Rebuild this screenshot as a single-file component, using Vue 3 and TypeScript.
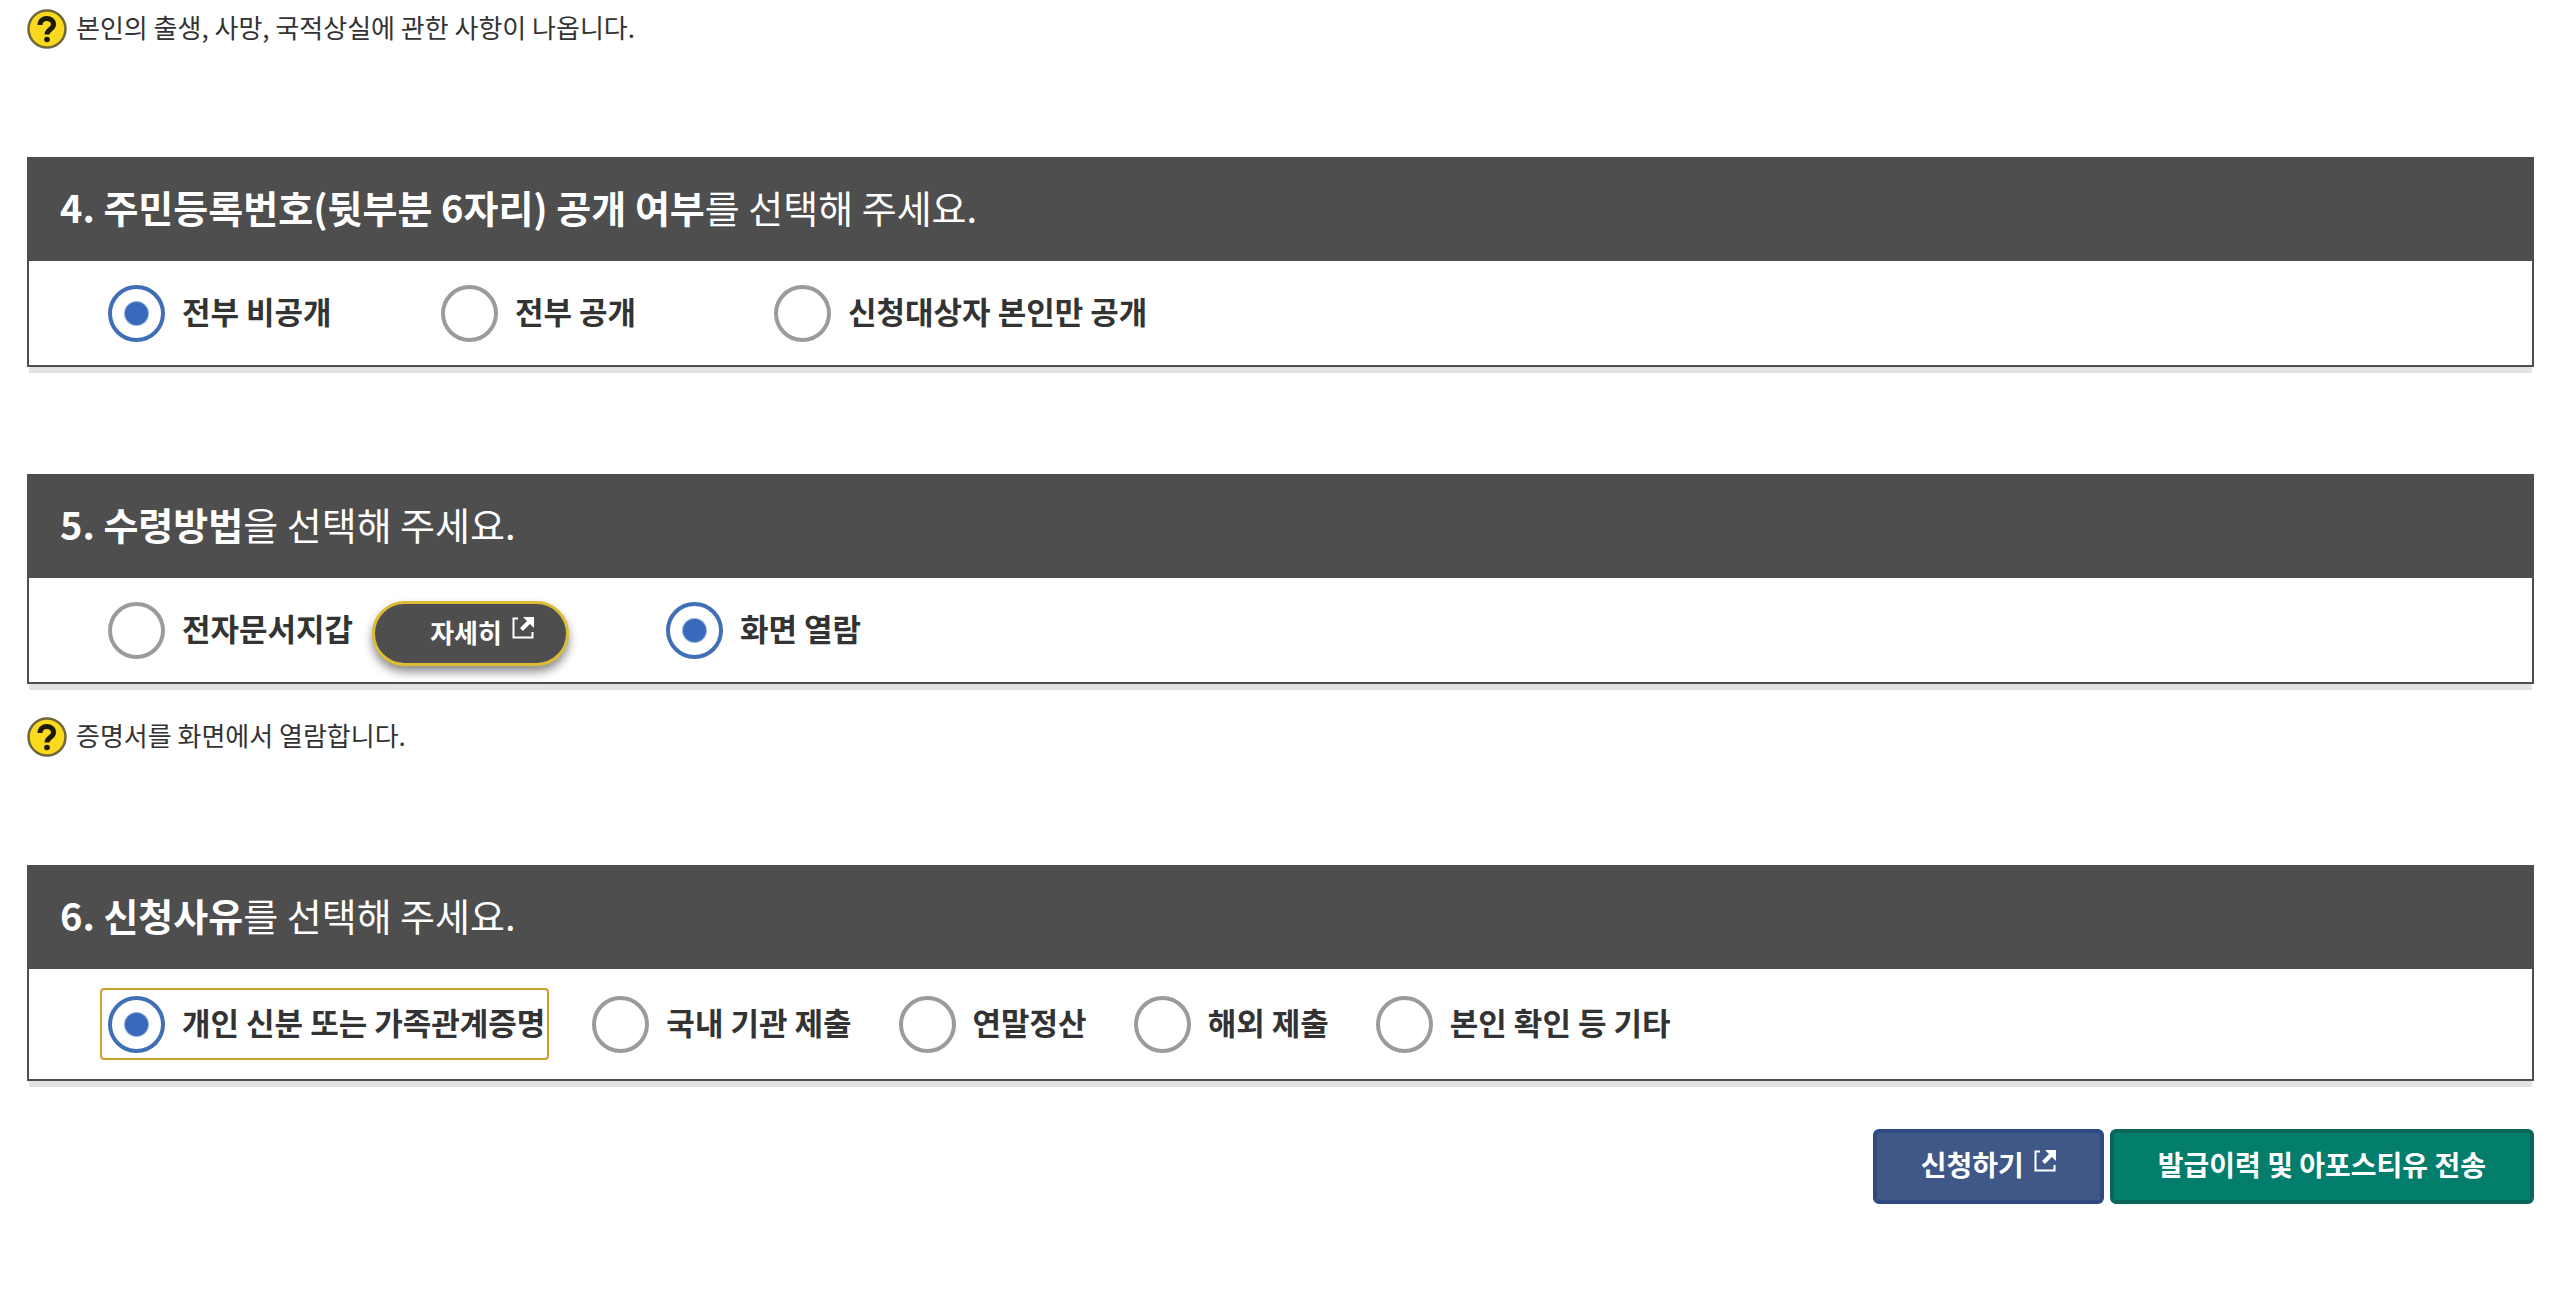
<script setup lang="ts">
import { ref } from 'vue'

interface Option {
  value: string
  label: string
  detail?: boolean
}

interface Section {
  id: string
  number: number
  strong: string
  rest: string
  layout: string
  options: Option[]
  note?: string
}

const introNote = '본인의 출생, 사망, 국적상실에 관한 사항이 나옵니다.'

const sections: Section[] = [
  {
    id: 'disclosure',
    number: 4,
    strong: '주민등록번호(뒷부분 6자리) 공개 여부',
    rest: '를 선택해 주세요.',
    layout: 'columns',
    options: [
      { value: 'none', label: '전부 비공개' },
      { value: 'all', label: '전부 공개' },
      { value: 'self', label: '신청대상자 본인만 공개' },
    ],
  },
  {
    id: 'receive',
    number: 5,
    strong: '수령방법',
    rest: '을 선택해 주세요.',
    layout: 'wide',
    options: [
      { value: 'wallet', label: '전자문서지갑', detail: true },
      { value: 'screen', label: '화면 열람' },
    ],
    note: '증명서를 화면에서 열람합니다.',
  },
  {
    id: 'reason',
    number: 6,
    strong: '신청사유',
    rest: '를 선택해 주세요.',
    layout: 'compact',
    options: [
      { value: 'personal', label: '개인 신분 또는 가족관계증명' },
      { value: 'domestic', label: '국내 기관 제출' },
      { value: 'yearend', label: '연말정산' },
      { value: 'overseas', label: '해외 제출' },
      { value: 'etc', label: '본인 확인 등 기타' },
    ],
  },
]

const selected = ref<Record<string, string>>({
  disclosure: 'none',
  receive: 'screen',
  reason: 'personal',
})
</script>

<template>
  <main class="page">
    <p class="note">
      <svg class="note-icon" viewBox="0 0 40 40" aria-hidden="true">
        <circle cx="20" cy="20" r="18.5" fill="#fbd91f" stroke="#6f673a" stroke-width="2.5" />
        <path d="M13 16c0-8.500 13.500-8.500 13.500-.5 0 5-6.500 4.500-6.500 10" fill="none" stroke="#1d1a08" stroke-width="5" />
        <circle cx="20" cy="30.5" r="2.800" fill="#1d1a08" />
      </svg>
      <span>{{ introNote }}</span>
    </p>

    <section v-for="section in sections" :key="section.id" class="block">
      <div class="panel" role="radiogroup" :aria-labelledby="section.id + '-title'">
        <h2 :id="section.id + '-title'" class="title">
          <strong>{{ section.number }}. {{ section.strong }}</strong>{{ section.rest }}
        </h2>
        <div class="options" :class="section.layout">
          <div v-for="option in section.options" :key="option.value" class="option">
            <label
              class="choice"
              :class="{ focused: section.id === 'reason' && selected[section.id] === option.value }"
            >
              <input v-model="selected[section.id]" type="radio" :name="section.id" :value="option.value" />
              <span>{{ option.label }}</span>
            </label>
            <button v-if="option.detail" type="button" class="detail">
              자세히
              <svg class="link-icon" viewBox="0 0 22 22" aria-hidden="true">
                <path d="M6 1.5H1.5V20.5H20.5V15" />
                <path class="arrow" d="M9.500 12.500L18 4" />
                <path class="head" d="M11 0H22V11L18.500 7.500 14.500 3.500Z" />
              </svg>
            </button>
          </div>
        </div>
      </div>
      <p v-if="section.note" class="note">
        <svg class="note-icon" viewBox="0 0 40 40" aria-hidden="true">
          <circle cx="20" cy="20" r="18.5" fill="#fbd91f" stroke="#6f673a" stroke-width="2.5" />
          <path d="M13 16c0-8.500 13.500-8.500 13.500-.5 0 5-6.500 4.500-6.500 10" fill="none" stroke="#1d1a08" stroke-width="5" />
          <circle cx="20" cy="30.5" r="2.800" fill="#1d1a08" />
        </svg>
        <span>{{ section.note }}</span>
      </p>
    </section>

    <div class="actions">
      <button type="button" class="action apply">
        신청하기
        <svg class="link-icon" viewBox="0 0 22 22" aria-hidden="true">
          <path d="M6 1.5H1.5V20.5H20.5V15" />
          <path class="arrow" d="M9.500 12.500L18 4" />
          <path class="head" d="M11 0H22V11L18.500 7.500 14.500 3.500Z" />
        </svg>
      </button>
      <button type="button" class="action history">발급이력 및 아포스티유 전송</button>
    </div>
  </main>
</template>

<style>
body {
  margin: 0;
  background: #fff;
}
</style>

<style scoped>
.page {
  padding: 8px 26px 92px 27px;
  color: #333;
  font-family: 'Noto Sans CJK KR', 'Noto Sans', sans-serif;
}

.note {
  display: flex;
  align-items: center;
  gap: 9px;
  height: 42px;
  margin: 0;
  font-size: 26px;
  line-height: 38px;
}

.note span {
  padding-bottom: 4px;
}

.note-icon {
  width: 40px;
  height: 40px;
  flex: none;
}

.block {
  margin-top: 107px;
}

.block .note {
  margin-top: 32px;
}

.panel {
  border: 2px solid #4e4e4e;
  box-shadow: 0 8px 0 -2px #e2e2e2;
}

.title {
  margin: 0;
  padding: 0 31px 6px;
  background: #4e4e4e;
  color: #fff;
  font-size: 38px;
  font-weight: 400;
  line-height: 96px;
}

.title strong {
  font-weight: 700;
}

.options {
  display: flex;
  align-items: center;
  height: 104px;
  padding: 0 71px;
}

.option {
  display: flex;
  align-items: center;
}

.columns .option {
  min-width: 333px;
}

.wide {
  gap: 89px;
}

.compact {
  gap: 35px;
  height: 110px;
}

.choice {
  display: flex;
  align-items: center;
  gap: 17px;
  height: 68px;
  padding: 0 2px 0 6px;
  border: 2px solid transparent;
  border-radius: 4px;
  font-size: 31px;
  font-weight: 700;
  line-height: 44px;
  white-space: nowrap;
}

.choice span {
  padding-bottom: 4px;
}

.choice.focused {
  border-color: #cf9f2c;
}

.choice input {
  appearance: none;
  box-sizing: border-box;
  width: 57px;
  height: 57px;
  margin: 0;
  flex: none;
  border: 4px solid #9b9b9b;
  border-radius: 50%;
  background: #fff;
}

.choice input:checked {
  border-color: #416fb5;
  background: radial-gradient(circle, #386abb 11px, #fff 13px);
}

.detail {
  display: flex;
  align-items: center;
  gap: 10px;
  box-sizing: border-box;
  height: 65px;
  margin: 6px 0 0 15px;
  padding: 0 32px 4px 55px;
  border: 3px solid #dcbc35;
  border-radius: 33px;
  background: #4e4e4e;
  box-shadow: 0 6px 10px rgba(0, 0, 0, 0.45);
  color: #fff;
  font: inherit;
  font-size: 26px;
  font-weight: 700;
}

.link-icon {
  width: 22px;
  height: 22px;
  margin-bottom: 6px;
  flex: none;
  fill: none;
  stroke: currentColor;
  stroke-width: 2;
}

.link-icon .arrow {
  stroke-width: 4;
}

.link-icon .head {
  fill: currentColor;
  stroke: none;
}

.actions {
  display: flex;
  justify-content: flex-end;
  gap: 6px;
  margin-top: 48px;
}

.action {
  display: flex;
  align-items: center;
  gap: 10px;
  box-sizing: border-box;
  height: 75px;
  padding: 0 44px 6px;
  border: 4px solid;
  border-radius: 6px;
  color: #fff;
  font: inherit;
  font-size: 28px;
  font-weight: 700;
  line-height: 44px;
}

.apply {
  border-color: #2e4a80;
  background: #405888;
}

.history {
  border-color: #0a6658;
  background: #037e6d;
}
</style>
